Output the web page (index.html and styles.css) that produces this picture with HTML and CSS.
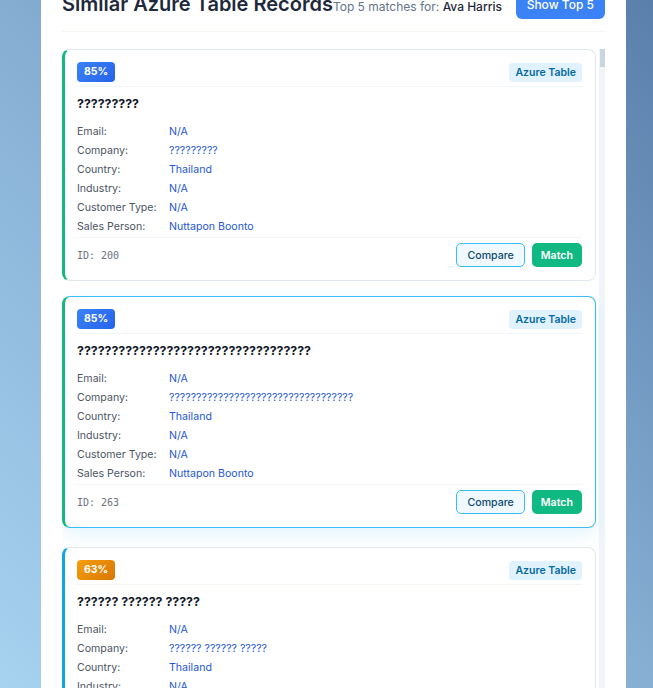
FILE: index.html
```html
<!DOCTYPE html>
<html lang="en">
<head>
<meta charset="utf-8">
<title>Similar Azure Table Records</title>
<link rel="stylesheet" href="styles.css">
</head>
<body>
<div class="modal">
  <div class="modal-header">
    <div class="title-group">
      <h2 class="modal-title">Similar Azure Table Records</h2>
      <span class="subtitle">Top 5 matches for: <strong>Ava Harris</strong></span>
    </div>
    <button class="btn-primary">Show Top 5</button>
  </div>
  <div class="results">
    <div class="card card-high">
      <div class="card-head">
        <span class="score score-blue">85%</span>
        <span class="source">Azure Table</span>
      </div>
      <div class="card-title">?????????</div>
      <div class="fields">
        <div class="label">Email:</div><div class="value">N/A</div>
        <div class="label">Company:</div><div class="value">?????????</div>
        <div class="label">Country:</div><div class="value">Thailand</div>
        <div class="label">Industry:</div><div class="value">N/A</div>
        <div class="label">Customer Type:</div><div class="value">N/A</div>
        <div class="label">Sales Person:</div><div class="value">Nuttapon Boonto</div>
      </div>
      <div class="card-foot">
        <span class="rec-id">ID: 200</span>
        <div class="actions">
          <button class="btn-compare">Compare</button>
          <button class="btn-match">Match</button>
        </div>
      </div>
    </div>

    <div class="card card-high is-hover">
      <div class="card-head">
        <span class="score score-blue">85%</span>
        <span class="source">Azure Table</span>
      </div>
      <div class="card-title">??????????????????????????????????</div>
      <div class="fields">
        <div class="label">Email:</div><div class="value">N/A</div>
        <div class="label">Company:</div><div class="value">??????????????????????????????????</div>
        <div class="label">Country:</div><div class="value">Thailand</div>
        <div class="label">Industry:</div><div class="value">N/A</div>
        <div class="label">Customer Type:</div><div class="value">N/A</div>
        <div class="label">Sales Person:</div><div class="value">Nuttapon Boonto</div>
      </div>
      <div class="card-foot">
        <span class="rec-id">ID: 263</span>
        <div class="actions">
          <button class="btn-compare">Compare</button>
          <button class="btn-match">Match</button>
        </div>
      </div>
    </div>

    <div class="card card-mid">
      <div class="card-head">
        <span class="score score-orange">63%</span>
        <span class="source">Azure Table</span>
      </div>
      <div class="card-title">?????? ?????? ?????</div>
      <div class="fields">
        <div class="label">Email:</div><div class="value">N/A</div>
        <div class="label">Company:</div><div class="value">?????? ?????? ?????</div>
        <div class="label">Country:</div><div class="value">Thailand</div>
        <div class="label">Industry:</div><div class="value">N/A</div>
        <div class="label">Customer Type:</div><div class="value">N/A</div>
        <div class="label">Sales Person:</div><div class="value">Nuttapon Boonto</div>
      </div>
      <div class="card-foot">
        <span class="rec-id">ID: 118</span>
        <div class="actions">
          <button class="btn-compare">Compare</button>
          <button class="btn-match">Match</button>
        </div>
      </div>
    </div>
  </div>
</div>
</body>
</html>
```

FILE: styles.css
```css
html, body {
  margin: 0;
  padding: 0;
}
body {
  height: 688px;
  overflow: hidden;
  font-family: Inter, "Noto Sans", sans-serif;
  background: linear-gradient(45deg, #a6d3f0 0%, #86aed3 50%, #5a7fab 100%);
}
.modal {
  box-sizing: border-box;
  width: 585px;
  height: 740px;
  margin: -32px 0 0 41px;
  padding: 21px 21px 0;
  background: #fff;
  border-radius: 12px;
  display: flex;
  flex-direction: column;
}
.modal-header {
  display: flex;
  align-items: center;
  justify-content: space-between;
  padding-bottom: 12px;
  border-bottom: 1px solid #f1f5f9;
  margin-bottom: 17px;
}
.title-group {
  display: flex;
  align-items: baseline;
}
.modal-title {
  margin: 0;
  font-size: 20px;
  line-height: 24px;
  font-weight: 600;
  color: #1e293b;
}
.subtitle {
  font-size: 12px;
  color: #64748b;
}
.subtitle strong {
  font-weight: 500;
  color: #1e293b;
}
.btn-primary {
  height: 30px;
  padding: 0 11px;
  border: 0;
  border-radius: 6px;
  background: #3b82f6;
  color: #fff;
  font-family: inherit;
  font-size: 12px;
  font-weight: 500;
}
.results {
  flex: 1;
  min-height: 0;
  overflow: hidden;
  padding-right: 9px;
  display: flex;
  flex-direction: column;
  gap: 17px;
  background:
    linear-gradient(#cbd5e1, #cbd5e1) right 0 top 0 / 5px 18px no-repeat,
    linear-gradient(#f1f5f9, #f1f5f9) right 0 top 0 / 6px 100% no-repeat;
}
.card {
  flex-shrink: 0;
  box-sizing: border-box;
  border: 1px solid #e2e8f0;
  border-left: 3px solid #10b981;
  border-radius: 8px;
  padding: 12px 13px 13px 12px;
  background: #fff;
}
.card-mid {
  border-left-color: #0ea5e9;
}
.card.is-hover {
  border-color: #38bdf8;
  border-left-color: #10b981;
  transform: translateY(-2px);
  box-shadow: 0 6px 18px rgba(14, 165, 233, 0.12);
}
.card-head {
  display: flex;
  justify-content: space-between;
  align-items: center;
  padding-bottom: 4px;
  border-bottom: 1px solid #f1f5f9;
  margin-bottom: 8px;
}
.score {
  height: 20px;
  line-height: 20px;
  padding: 0 7px;
  border-radius: 4px;
  color: #fff;
  font-size: 10.5px;
  font-weight: 700;
}
.score-blue {
  background: linear-gradient(135deg, #3b82f6, #2563eb);
}
.score-orange {
  background: linear-gradient(135deg, #f59e0b, #d97706);
}
.source {
  height: 19px;
  line-height: 19px;
  padding: 0 6px;
  border-radius: 4px;
  background: #e0f2fe;
  color: #0369a1;
  font-size: 10.5px;
  font-weight: 600;
}
.card-title {
  font-size: 12.3px;
  line-height: 18px;
  font-weight: 700;
  color: #111827;
  margin-bottom: 9px;
}
.fields {
  display: grid;
  grid-template-columns: 92px 1fr;
  grid-auto-rows: 19px;
  align-items: center;
  font-size: 10.6px;
  margin-bottom: 1px;
}
.label {
  color: #4b5563;
}
.value {
  color: #2557d6;
}
.card-foot {
  display: flex;
  justify-content: space-between;
  align-items: center;
  border-top: 1px solid #f1f5f9;
  padding-top: 5px;
}
.rec-id {
  font-family: "DejaVu Sans Mono", monospace;
  font-size: 10px;
  color: #6b7280;
}
.actions {
  display: flex;
  gap: 7px;
}
.btn-compare, .btn-match {
  height: 24px;
  box-sizing: border-box;
  border-radius: 5px;
  font-family: inherit;
  font-size: 10.6px;
}
.btn-compare {
  padding: 0 10px;
  border: 1px solid #38bdf8;
  background: #f0f9ff;
  color: #0c4a6e;
  font-weight: 500;
}
.btn-match {
  padding: 0 9px;
  border: 0;
  background: #10b981;
  color: #fff;
  font-weight: 600;
}
```
